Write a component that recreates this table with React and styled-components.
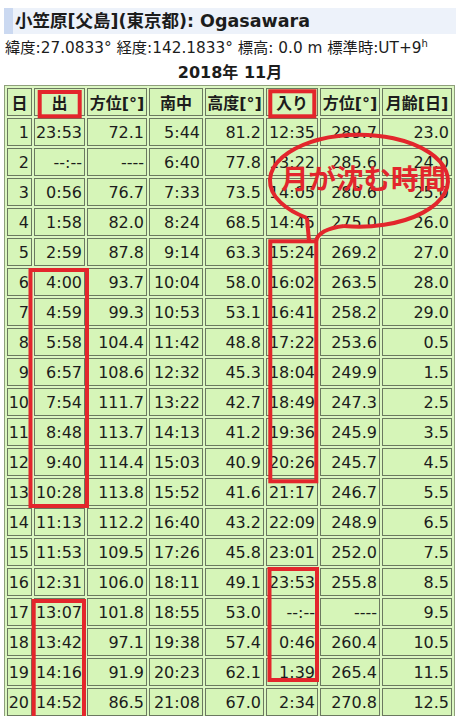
import React from 'react';
import styled, { createGlobalStyle } from 'styled-components';

const GlobalStyle = createGlobalStyle`
  html, body {
    margin: 0;
    padding: 0;
    background: #fff;
  }
  body {
    font-family: "DejaVu Sans", "Noto Sans CJK JP", sans-serif;
    color: #1c1c1c;
  }
`;

const Page = styled.div`
  position: relative;
  width: 459px;
  height: 716px;
  overflow: hidden;
  box-sizing: border-box;
  padding: 8px 3px 0 4px;
`;

const TitleBar = styled.h1`
  margin: 0;
  height: 26px;
  line-height: 26px;
  background: #edf2fa;
  border-left: 9px solid #cbd9f1;
  padding-left: 2px;
  font-size: 17.5px;
  font-weight: 700;
  white-space: nowrap;
`;

const Info = styled.div`
  margin-top: 4px;
  padding-left: 1px;
  line-height: 20px;
  font-size: 15.3px;
  white-space: nowrap;

  sup {
    font-size: 10px;
    vertical-align: 6px;
    line-height: 0;
  }
`;

const Caption = styled.div`
  margin-top: 5px;
  line-height: 20px;
  text-align: center;
  font-size: 16px;
  font-weight: 700;
`;

const Table = styled.table`
  margin-top: 2px;
  border: 1px solid #8f9f7c;
  border-spacing: 2px;
  table-layout: fixed;
  background: #dcf7c2;
  font-size: 16px;
`;

const Cell = styled.td`
  box-sizing: border-box;
  width: ${(p) => p.$w}px;
  height: 28px;
  padding: 0 2px 0 0;
  border: 1px solid #6b7860;
  background: #d6f5b8;
  text-align: right;
  vertical-align: middle;
  white-space: nowrap;
`;

const Head = styled(Cell).attrs({ as: 'th' })`
  padding: 0;
  text-align: center;
  font-weight: 700;
`;

const Overlay = styled.svg`
  position: absolute;
  left: 0;
  top: 0;
  pointer-events: none;
`;

const BubbleLabel = styled.span`
  position: absolute;
  left: 281px;
  top: 163px;
  font-family: "Noto Sans CJK JP", sans-serif;
  font-size: 27.5px;
  line-height: 28px;
  font-weight: 700;
  color: #e3262c;
  white-space: nowrap;
  pointer-events: none;
`;

const widths = [25, 51, 60, 54, 59, 52, 60, 70];
const heads = ['日', '出', '方位[°]', '南中', '高度[°]', '入り', '方位[°]', '月齢[日]'];

const rows = [
  ['1', '23:53', '72.1', '5:44', '81.2', '12:35', '289.7', '23.0'],
  ['2', '--:--', '----', '6:40', '77.8', '13:22', '285.6', '24.0'],
  ['3', '0:56', '76.7', '7:33', '73.5', '14:05', '280.6', '25.0'],
  ['4', '1:58', '82.0', '8:24', '68.5', '14:45', '275.0', '26.0'],
  ['5', '2:59', '87.8', '9:14', '63.3', '15:24', '269.2', '27.0'],
  ['6', '4:00', '93.7', '10:04', '58.0', '16:02', '263.5', '28.0'],
  ['7', '4:59', '99.3', '10:53', '53.1', '16:41', '258.2', '29.0'],
  ['8', '5:58', '104.4', '11:42', '48.8', '17:22', '253.6', '0.5'],
  ['9', '6:57', '108.6', '12:32', '45.3', '18:04', '249.9', '1.5'],
  ['10', '7:54', '111.7', '13:22', '42.7', '18:49', '247.3', '2.5'],
  ['11', '8:48', '113.7', '14:13', '41.2', '19:36', '245.9', '3.5'],
  ['12', '9:40', '114.4', '15:03', '40.9', '20:26', '245.7', '4.5'],
  ['13', '10:28', '113.8', '15:52', '41.6', '21:17', '246.7', '5.5'],
  ['14', '11:13', '112.2', '16:40', '43.2', '22:09', '248.9', '6.5'],
  ['15', '11:53', '109.5', '17:26', '45.8', '23:01', '252.0', '7.5'],
  ['16', '12:31', '106.0', '18:11', '49.1', '23:53', '255.8', '8.5'],
  ['17', '13:07', '101.8', '18:55', '53.0', '--:--', '----', '9.5'],
  ['18', '13:42', '97.1', '19:38', '57.4', '0:46', '260.4', '10.5'],
  ['19', '14:16', '91.9', '20:23', '62.1', '1:39', '265.4', '11.5'],
  ['20', '14:52', '86.5', '21:08', '67.0', '2:34', '270.8', '12.5'],
];

const RED = '#e3262c';

const Annotations = () => (
  <Overlay width="459" height="716" viewBox="0 0 459 716">
    <g fill="none" stroke={RED} strokeWidth="4">
      <rect x="39.7" y="92" width="40" height="24.3" />
      <rect x="270.3" y="91.3" width="44" height="25" />
      <rect x="30.5" y="270" width="56.5" height="236" />
      <rect x="270.3" y="241.3" width="46" height="240" />
      <rect x="269.5" y="569" width="47.5" height="111" />
      <rect x="33.7" y="601" width="50.3" height="130" />
      <path d="M 307 218 A 89 46 0 1 1 344 226" />
      <path d="M 307 218 L 309 241" />
      <path d="M 316 241 C 318 232, 328 228, 344 226" />
    </g>
  </Overlay>
);

export default function App() {
  return (
    <>
      <GlobalStyle />
      <Page>
        <TitleBar>小笠原[父島](東京都): Ogasawara</TitleBar>
        <Info>
          緯度:27.0833° 経度:142.1833° 標高: 0.0 m 標準時:UT+9<sup>h</sup>
        </Info>
        <Caption>2018年 11月</Caption>
        <Table>
          <thead>
            <tr>
              {heads.map((h, i) => (
                <Head key={i} $w={widths[i]}>{h}</Head>
              ))}
            </tr>
          </thead>
          <tbody>
            {rows.map((r) => (
              <tr key={r[0]}>
                {r.map((v, i) => (
                  <Cell key={i} $w={widths[i]}>{v}</Cell>
                ))}
              </tr>
            ))}
          </tbody>
        </Table>
        <Annotations />
        <BubbleLabel>月が沈む時間</BubbleLabel>
      </Page>
    </>
  );
}
